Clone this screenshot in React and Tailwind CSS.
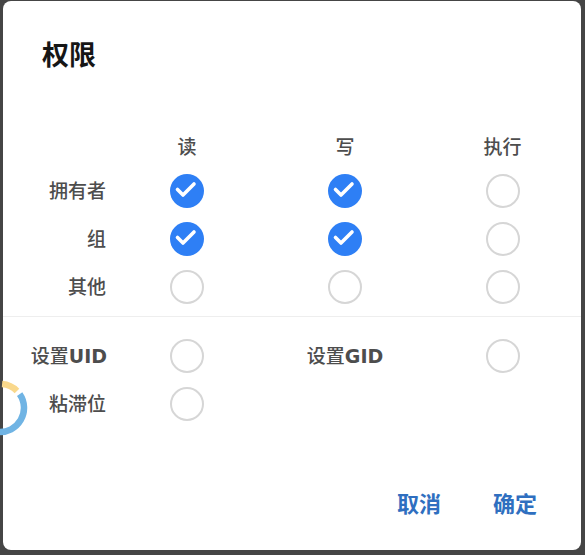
const FONT = { fontFamily: '"Noto Sans", "Noto Sans CJK SC", sans-serif' };
const LATIN = { fontFamily: '"DejaVu Sans", "Noto Sans CJK SC", sans-serif' };

function Radio({ checked }) {
  if (checked) {
    return (
      <div className="h-[34px] w-[34px] rounded-full bg-[#2e7ff5]">
        <svg width="34" height="34" viewBox="0 0 34 34" fill="none">
          <path d="M7.5 15.5l5.5 5.5 11-11" stroke="white" strokeWidth="3.6" strokeLinecap="round" strokeLinejoin="round" />
        </svg>
      </div>
    );
  }
  return <div className="h-[34px] w-[34px] rounded-full border-2 border-[#d6d6d6] bg-white" />;
}

const rows = [
  { label: "拥有者", values: [true, true, false] },
  { label: "组", values: [true, true, false] },
  { label: "其他", values: [false, false, false] },
];

export default function App() {
  return (
    <div className="relative h-[555px] w-[585px] overflow-hidden bg-[#454545] pl-[3px] pt-[1px]" style={FONT}>
      <div className="flex h-[549px] w-[578px] flex-col rounded-[8px] bg-white">
        {/* Title */}
        <h1 className="pl-[39px] pt-[36px] text-[27px] font-bold leading-[36px] text-[#161616]">权限</h1>

        {/* Permission matrix */}
        <div className="mt-[54px] grid grid-cols-[105px_158px_158px_157px]">
          <div className="h-[40px]" />
          {["读", "写", "执行"].map((h) => (
            <div key={h} className="flex h-[40px] items-center justify-center text-[19px] font-medium text-[#4d4d4d]">
              {h}
            </div>
          ))}
          {rows.map((row) => (
            <div key={row.label} className="contents">
              <div className="flex h-[48px] items-center justify-end pr-[2px] text-[19px] font-medium text-[#4d4d4d]">
                {row.label}
              </div>
              {row.values.map((v, i) => (
                <div key={i} className="flex h-[48px] items-center justify-center">
                  <Radio checked={v} />
                </div>
              ))}
            </div>
          ))}
        </div>

        <div className="mt-[5px] h-px bg-[#eeeeee]" />

        {/* Special bits */}
        <div className="grid grid-cols-[105px_158px_158px_157px] pt-[15px]">
          <div className="flex h-[48px] items-center justify-end pr-[1px] text-[19px] font-medium text-[#4d4d4d]">
            设置<span className="font-semibold" style={LATIN}>UID</span>
          </div>
          <div className="flex h-[48px] items-center justify-center">
            <Radio />
          </div>
          <div className="flex h-[48px] items-center justify-center text-[19px] font-medium text-[#4d4d4d]">
            设置<span className="font-semibold" style={LATIN}>GID</span>
          </div>
          <div className="flex h-[48px] items-center justify-center">
            <Radio />
          </div>
          <div className="flex h-[48px] items-center justify-end pr-[2px] text-[19px] font-medium text-[#4d4d4d]">粘滞位</div>
          <div className="flex h-[48px] items-center justify-center">
            <Radio />
          </div>
        </div>

        {/* Actions */}
        <div className="mt-[55px] flex h-[40px] items-center justify-end gap-[52px] pr-[44px] text-[22px] font-bold text-[#2f6fc0]">
          <button>取消</button>
          <button>确定</button>
        </div>
      </div>

      {/* loading ring peeking in from the left */}
      <svg className="absolute left-[-28px] top-[380px]" width="56" height="56" viewBox="0 0 56 56" fill="none">
        <path d="M30.09 4.09A24 24 0 0 1 44.97 11.03" stroke="#f9d88c" strokeWidth="6.5" />
        <path d="M47.66 14.23A24 24 0 0 1 25.91 51.91" stroke="#70b4e4" strokeWidth="6.5" />
      </svg>
    </div>
  );
}
